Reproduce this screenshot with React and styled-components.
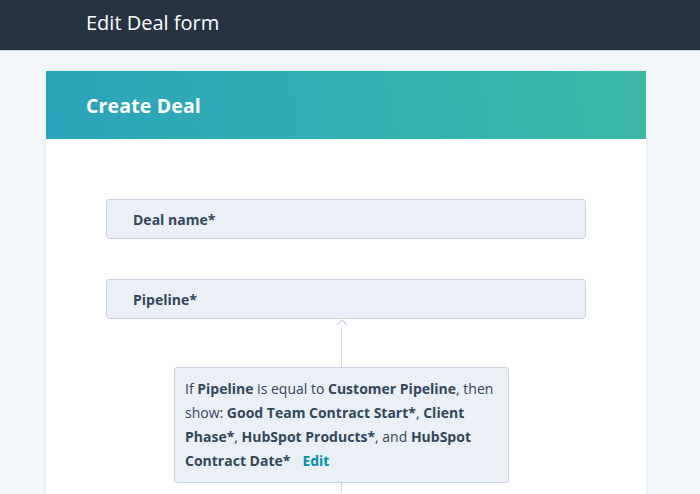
import React from "react";
import styled, { createGlobalStyle } from "styled-components";

const Global = createGlobalStyle`
  html, body { margin: 0; padding: 0; }
  body {
    background: #f5f8fa;
    font-family: "Open Sans", "Noto Sans", "Liberation Sans", sans-serif;
    color: #33475b;
  }
`;

const TopBar = styled.header`
  height: 51px;
  background: #253342;
  border-bottom: 1px solid #cbd6e2;
  box-sizing: border-box;
  display: flex;
  align-items: center;
  padding-left: 86px;
  color: #ffffff;
  font-size: 20px;
  font-weight: 400;
  padding-bottom: 6px;
`;

const Main = styled.main`
  padding: 20px 0 0 46px;
`;

const Card = styled.section`
  width: 600px;
  background: #ffffff;
  box-shadow: 0 0 4px rgba(45, 62, 80, 0.12);
  min-height: 430px;
`;

const CardHeader = styled.div`
  height: 68px;
  background: linear-gradient(80deg, #2aa4ba 0%, #32aeb2 50%, #3bb9a4 100%);
  display: flex;
  align-items: center;
  padding-left: 40px;
  color: #ffffff;
  font-size: 19.5px;
  font-weight: 700;
  letter-spacing: 0.15px;
`;

const Body = styled.div`
  padding: 60px 60px 0 60px;
  display: flex;
  flex-direction: column;
`;

const Field = styled.div`
  height: 40px;
  box-sizing: border-box;
  background: #eaf0f6;
  border: 1px solid #cbd6e2;
  border-radius: 3px;
  display: flex;
  align-items: center;
  padding-left: 26px;
  font-size: 14px;
  font-weight: 700;
  color: #33475b;
  margin-bottom: ${(p) => p.$gap || 0}px;
`;

const Connector = styled.div`
  display: flex;
  flex-direction: column;
  align-items: flex-start;
  padding-left: 68px;
`;

const Stem = styled.div`
  width: 335px;
  display: flex;
  flex-direction: column;
  align-items: center;
`;

const Arrow = styled.svg`
  display: block;
`;

const Dotted = styled.div`
  width: 0;
  height: ${(p) => p.$h}px;
  border-left: 1px dotted #b0c1d4;
`;

const Rule = styled.div`
  width: 335px;
  box-sizing: border-box;
  background: #eaf0f6;
  border: 1px solid #cbd6e2;
  border-radius: 3px;
  padding: 9px 0 9px 10px;
  font-size: 14px;
  line-height: 24px;
  color: #33475b;
  white-space: nowrap;
`;

const B = styled.strong`
  font-weight: 700;
`;

const EditLink = styled.a`
  color: #0091ae;
  font-weight: 700;
  margin-left: 12px;
  text-decoration: none;
`;

export default function App() {
  return (
    <>
      <Global />
      <TopBar>Edit Deal form</TopBar>
      <Main>
        <Card>
          <CardHeader>Create Deal</CardHeader>
          <Body>
            <Field $gap={40}>Deal name*</Field>
            <Field>Pipeline*</Field>
            <Connector>
              <Stem>
                <Arrow width="12" height="7" viewBox="0 0 12 7">
                  <path d="M1 6 L6 1 L11 6" fill="none" stroke="#c4d2e1" strokeWidth="1.2" />
                </Arrow>
                <Dotted $h={41} />
              </Stem>
              <Rule>
                If <B>Pipeline</B> is equal to <B>Customer Pipeline</B>, then
                <br />
                show: <B>Good Team Contract Start*</B>, <B>Client</B>
                <br />
                <B>Phase*</B>, <B>HubSpot Products*</B>, and <B>HubSpot</B>
                <br />
                <B>Contract Date*</B>
                <EditLink href="#">Edit</EditLink>
              </Rule>
              <Stem>
                <Dotted $h={20} />
              </Stem>
            </Connector>
          </Body>
        </Card>
      </Main>
    </>
  );
}
